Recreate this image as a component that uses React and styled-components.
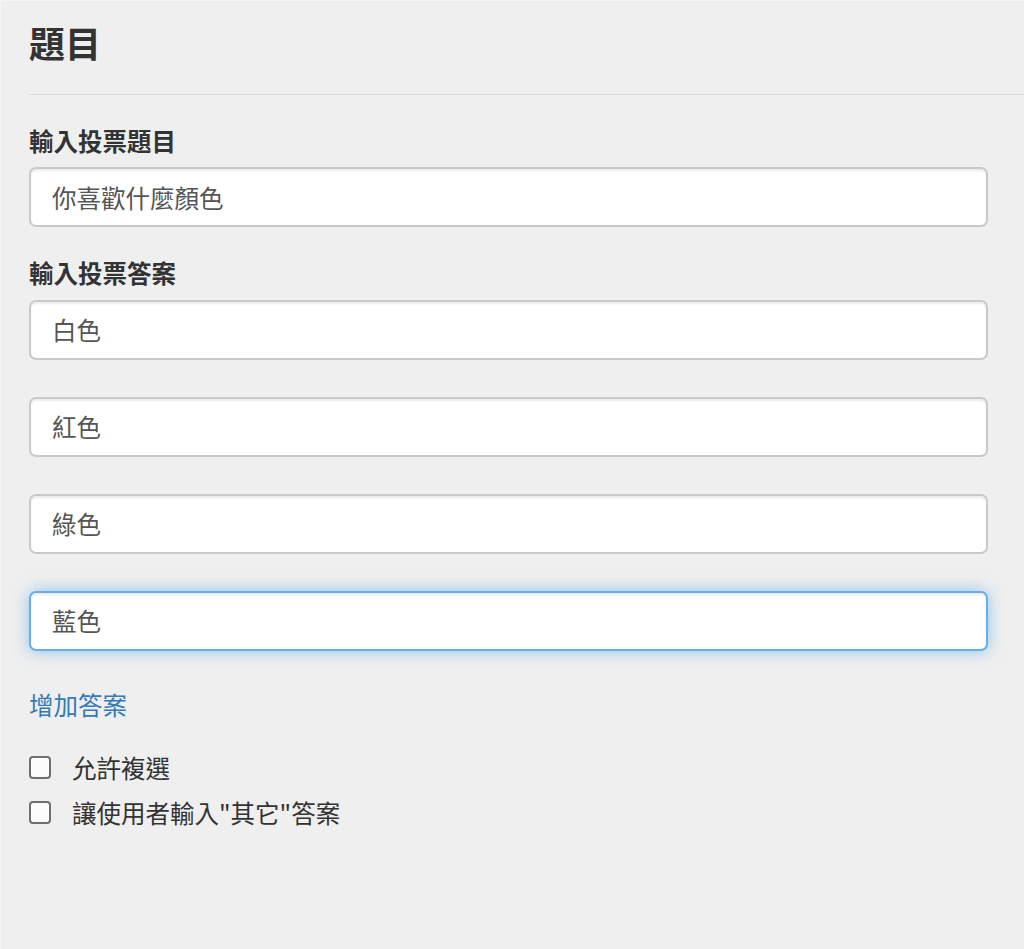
import React, { useEffect, useRef } from 'react';
import styled, { createGlobalStyle, css } from 'styled-components';

const GlobalStyle = createGlobalStyle`
  html, body {
    margin: 0;
    padding: 0;
    background: #efefef;
  }
  body {
    font-family: "Noto Sans CJK TC", "Noto Sans", "Liberation Sans", sans-serif;
    color: #333;
  }
  * { box-sizing: border-box; }
`;

// Whole form panel
const Panel = styled.form`
  min-height: 949px;
  padding: 0 36px 0 28px;
  border-left: 1px solid #f5f5f5;
  border-top: 1px solid #f5f5f5;
`;

// Title with the rule under it
const Legend = styled.h3`
  margin: 0 -36px 0 0;
  padding: 15px 0 25px;
  font-size: 36px;
  line-height: 52.5px;
  font-weight: 700;
  color: #333;
  border-bottom: 1.5px solid #dadada;
`;

const Group = styled.div`
  margin-top: 28px;
`;

const Label = styled.label`
  display: block;
  font-size: 24.5px;
  line-height: 35px;
  font-weight: 700;
  color: #333;
  margin-bottom: 9.5px;
`;

const TextInput = styled.input`
  display: block;
  width: 100%;
  height: 60px;
  padding: 0 21px;
  font-family: inherit;
  font-size: 24.5px;
  color: #555;
  background: #fff;
  border: 2px solid #c9c9c9;
  border-radius: 7px;
  box-shadow: inset 0 2px 2px rgba(0, 0, 0, 0.08);
  outline: none;
  caret-color: #333;

  & + & {
    margin-top: 37px;
  }

  ${(p) =>
    p.$focused &&
    css`
      border-color: #66afe9;
      box-shadow: inset 0 2px 2px rgba(0, 0, 0, 0.075),
        0 0 16px rgba(102, 175, 233, 0.7);
    `}
`;

const AddLink = styled.a`
  display: inline-block;
  margin-top: 36.5px;
  font-size: 24.5px;
  line-height: 35px;
  color: #337ab7;
  text-decoration: none;
  cursor: pointer;
`;

const Options = styled.div`
  margin-top: 28px;
  display: flex;
  flex-direction: column;
  gap: 10px;
`;

const CheckRow = styled.label`
  display: flex;
  align-items: center;
  gap: 21px;
  font-size: 24.5px;
  line-height: 35px;
  color: #333;
`;

const Box = styled.input.attrs({ type: 'checkbox' })`
  appearance: none;
  margin: 0;
  width: 22px;
  height: 23px;
  background: #fcfcfc;
  border: 2px solid #6f6f6f;
  border-radius: 4px;
  flex-shrink: 0;
`;

const answers = ['白色', '紅色', '綠色', '藍色'];

const App = () => {
  const lastRef = useRef(null);

  useEffect(() => {
    const el = lastRef.current;
    if (el) {
      el.focus();
      el.setSelectionRange(el.value.length, el.value.length);
    }
  }, []);

  return (
    <>
      <GlobalStyle />
      <Panel onSubmit={(e) => e.preventDefault()}>
        <Legend>題目</Legend>

        <Group>
          <Label>輸入投票題目</Label>
          <TextInput defaultValue="你喜歡什麼顏色" />
        </Group>

        <Group>
          <Label>輸入投票答案</Label>
          {answers.map((a, i) => (
            <TextInput
              key={a}
              defaultValue={a}
              $focused={i === answers.length - 1}
              ref={i === answers.length - 1 ? lastRef : undefined}
            />
          ))}
        </Group>

        <AddLink>增加答案</AddLink>

        <Options>
          <CheckRow>
            <Box />
            允許複選
          </CheckRow>
          <CheckRow>
            <Box />
            讓使用者輸入"其它"答案
          </CheckRow>
        </Options>
      </Panel>
    </>
  );
};

export default App;
